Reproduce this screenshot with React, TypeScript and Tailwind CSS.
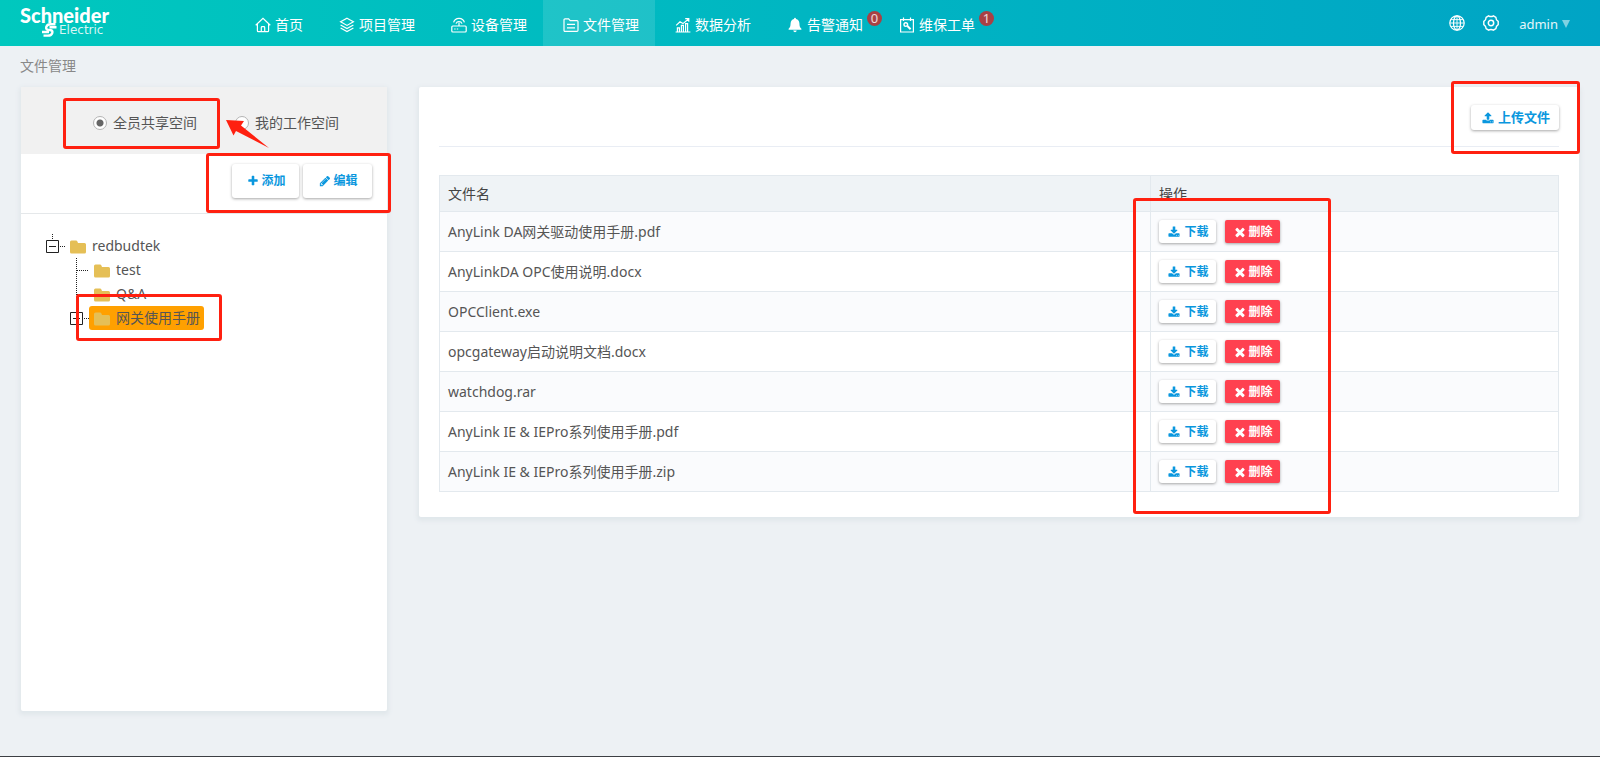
import type { ReactNode } from "react";

interface NavItem {
  label: string;
  icon: ReactNode;
  active?: boolean;
  badge?: number;
}

function LineIcon({ children }: { children: ReactNode }) {
  return (
    <svg viewBox="0 0 16 16" className="h-4 w-4 shrink-0" fill="none" stroke="currentColor" strokeWidth="1.2" aria-hidden="true">
      {children}
    </svg>
  );
}

function Glyph({ d, viewBox = "0 0 1792 1792" }: { d: string; viewBox?: string }) {
  return (
    <svg viewBox={viewBox} className="h-3 w-3 shrink-0" fill="currentColor" aria-hidden="true">
      <path d={d} />
    </svg>
  );
}

const glyphs = {
  upload:
    "M1280 1472q0-26-19-45t-45-19-45 19-19 45 19 45 45 19 45-19 19-45zm256 0q0-26-19-45t-45-19-45 19-19 45 19 45 45 19 45-19 19-45zm128-224v320q0 40-28 68t-68 28h-1472q-40 0-68-28t-28-68v-320q0-40 28-68t68-28h427q21 56 70.5 92t110.5 36h256q61 0 110.5-36t70.5-92h427q40 0 68 28t28 68zm-325-648q-17 40-59 40h-256v448q0 26-19 45t-45 19h-256q-26 0-45-19t-19-45v-448h-256q-42 0-59-40-17-39 14-69l448-448q18-19 45-19t45 19l448 448q31 30 14 69z",
  download:
    "M1344 1344q0-26-19-45t-45-19-45 19-19 45 19 45 45 19 45-19 19-45zm256 0q0-26-19-45t-45-19-45 19-19 45 19 45 45 19 45-19 19-45zm128-224v320q0 40-28 68t-68 28h-1472q-40 0-68-28t-28-68v-320q0-40 28-68t68-28h465l135 136q58 56 136 56t136-56l136-136h464q40 0 68 28t28 68zm-325-569q17 41-14 70l-448 448q-18 19-45 19t-45-19l-448-448q-31-29-14-70 17-39 59-39h256v-448q0-26 19-45t45-19h256q26 0 45 19t19 45v448h256q42 0 59 39z",
  times:
    "M1490 1322q0 40-28 68l-136 136q-28 28-68 28t-68-28l-294-294-294 294q-28 28-68 28t-68-28l-136-136q-28-28-28-68t28-68l294-294-294-294q-28-28-28-68t28-68l136-136q28-28 68-28t68 28l294 294 294-294q28-28 68-28t68 28l136 136q28 28 28 68t-28 68l-294 294 294 294q28 28 28 68z",
  plus:
    "M1600 736v192q0 40-28 68t-68 28h-416v416q0 40-28 68t-68 28h-192q-40 0-68-28t-28-68v-416h-416q-40 0-68-28t-28-68v-192q0-40 28-68t68-28h416v-416q0-40 28-68t68-28h192q40 0 68 28t28 68v416h416q40 0 68 28t28 68z",
  pencil:
    "M491 1536l91-91-235-235-91 91v107h128v128h107zm523-928q0-22-22-22-10 0-17 7l-542 542q-7 7-7 17 0 22 22 22 10 0 17-7l542-542q7-7 7-17zm-54-192l416 416-832 832h-416v-416zm683 96q0 53-37 90l-166 166-416-416 166-165q36-38 90-38 53 0 91 38l235 234q37 39 37 91z",
};

const navItems: NavItem[] = [
  {
    label: "首页",
    icon: (
      <LineIcon>
        <path d="M.7 8.2 8 1.4l7.3 6.8M2.4 7v6.7q0 1 1 1h9.2q1 0 1-1V7" />
        <path d="M6.3 14.5v-4q0-.8.8-.8h1.8q.8 0 .8.8v4" />
      </LineIcon>
    ),
  },
  {
    label: "项目管理",
    icon: (
      <LineIcon>
        <path d="M8 1.2 14.4 4.8 8 8.4 1.6 4.8Z" />
        <path d="M1.6 7.9 8 11.5l6.4-3.6M1.6 11 8 14.6l6.4-3.6" />
      </LineIcon>
    ),
  },
  {
    label: "设备管理",
    icon: (
      <LineIcon>
        <rect x=".8" y="9" width="14.4" height="6" rx="1" />
        <path d="M8 9V5.6M2.6 5.4a5.6 5.6 0 0 1 10.800 0M5 6.600a3.200 3.200 0 0 1 6 0M3.2 12h1.4M5.8 12h1.4" />
      </LineIcon>
    ),
  },
  {
    label: "文件管理",
    active: true,
    icon: (
      <LineIcon>
        <path d="M1 13.2V2.8q0-1 1-1h3.6l1.6 1.8H14q1 0 1 1v8.6q0 1.2-1 1.2H2q-1 0-1-1.2Z" />
        <path d="M4 7.4h8M4 10.8h8" />
      </LineIcon>
    ),
  },
  {
    label: "数据分析",
    icon: (
      <LineIcon>
        <path d="M.6 15h14.8M2.4 15v-4.2h2V15M6.4 15V8.4h2V15M10.6 15V6.6h2V15M1.2 8.4 5 4.8l3 1.8 5.2-4.4M10.2 1.6h3.6v3.2" />
      </LineIcon>
    ),
  },
  {
    label: "告警通知",
    badge: 0,
    icon: (
      <svg viewBox="0 0 16 16" className="h-4 w-4 shrink-0" fill="currentColor" aria-hidden="true">
        <path d="M8 .8q.9 0 1 1.1 3.2.7 3.4 4.4c.1 3 .5 4.2 2 5.4v1H1.6v-1c1.5-1.2 1.9-2.4 2-5.4Q3.8 2.6 7 1.9 7.1.8 8 .8ZM6.2 13.5h3.6q-.4 1.7-1.8 1.7t-1.8-1.7Z" />
      </svg>
    ),
  },
  {
    label: "维保工单",
    badge: 1,
    icon: (
      <LineIcon>
        <path d="M1.6 2.6h12.800V15H1.6ZM4.500 .6v3.400M11.500 .6v3.400" />
        <circle cx="6.800" cy="7.600" r="1.800" strokeWidth="1.400" />
        <path d="m8.400 9 3.200 3.200" strokeWidth="2" />
      </LineIcon>
    ),
  },
];

const files = [
  "AnyLink DA网关驱动使用手册.pdf",
  "AnyLinkDA OPC使用说明.docx",
  "OPCClient.exe",
  "opcgateway启动说明文档.docx",
  "watchdog.rar",
  "AnyLink IE & IEPro系列使用手册.pdf",
  "AnyLink IE & IEPro系列使用手册.zip",
];

const whiteButton = "flex items-center justify-center rounded-[3px] bg-white pl-0.5 font-bold text-[#0a97de] shadow-[0_1px_3px_rgba(0,0,0,0.35)]";

function Logo() {
  return (
    <svg viewBox="0 0 100 40" className="h-10 w-[100px]" fill="#fff" role="img" aria-label="Schneider Electric">
      <text x="0" y="20" fontFamily="Lato" fontWeight="900" fontSize="20">Schneider</text>
      <text x="39" y="31" fontFamily="DejaVu Sans" fontSize="12" fillOpacity=".85">Electric</text>
      <path
        d="M35.500 21.200h-5q-3.300 0-4.200 2.600-.8 2.700 2 3.100l2.600.4q2 .4 1.400 2.500-.8 2.800-4.300 2.800h-4.500M29.500 24.300h7M22 29h7"
        fill="none"
        stroke="#fff"
        strokeWidth="2.400"
      />
    </svg>
  );
}

function TopBar() {
  return (
    <header className="flex h-[46px] items-center bg-gradient-to-r from-[#00c8be] to-[#00a4c5] pl-5 pr-[30px] text-white">
      <a href="#" className="w-[215px] shrink-0"><Logo /></a>
      <nav className="flex h-full flex-1">
        {navItems.map((item) => (
          <a
            key={item.label}
            href="#"
            className={`relative flex items-center gap-1 whitespace-nowrap pl-5 pr-4 pt-1 ${item.active ? "bg-white/12" : ""}`}
          >
            {item.icon}
            {item.label}
            {item.badge !== undefined && (
              <span className="absolute -right-[3px] top-[11px] h-[15px] w-[15px] rounded-full bg-[#a94044] text-center text-[13px] leading-[15px] text-white/80">
                {item.badge}
              </span>
            )}
          </a>
        ))}
      </nav>
      <div className="flex items-center gap-[18px]">
        <button type="button" aria-label="语言">
          <LineIcon>
            <circle cx="8" cy="8" r="7.2" />
            <ellipse cx="8" cy="8" rx="3.5" ry="7.2" />
            <path d="M8 .8v14.4M.8 8h14.4M2 4.6h12M2 11.400h12" strokeWidth=".9" />
          </LineIcon>
        </button>
        <button type="button" aria-label="设置">
          <LineIcon>
            <path strokeWidth="1.4" d="M5.6.8q2.4 1.5 4.8 0l2.5 1.5q-.1 2.7 2.3 4.100v3.200q-2.400 1.400-2.300 4.100l-2.500 1.500q-2.400-1.500-4.800 0l-2.500-1.500q.1-2.700-2.300-4.100V6.400q2.400-1.400 2.300-4.100Z" />
            <circle cx="8" cy="8" r="2.7" strokeWidth="1.5" />
          </LineIcon>
        </button>
        <button type="button" className="flex items-center gap-1 pl-0.5 pt-0.5 text-[13px] text-white/90">
          admin
          <svg viewBox="0 0 8 8" className="h-2 w-2" fill="#fff" fillOpacity=".5" aria-hidden="true">
            <path d="M0 0h8L4 8Z" />
          </svg>
        </button>
      </div>
    </header>
  );
}

interface TreeRowProps {
  label: string;
  kind: "root" | "leaf" | "closed";
  selected?: boolean;
}

function TreeRow({ label, kind, selected }: TreeRowProps) {
  return (
    <div className="flex h-6 items-center">
      <svg viewBox="0 0 24 24" className="h-6 w-6 shrink-0" fill="none" stroke="#222" aria-hidden="true">
        <path d={kind === "leaf" ? "M11.5 0v24M12 12.5h12" : "M11.5 0v6M19 12.5h5"} strokeDasharray="1 1" />
        {kind !== "leaf" && <path d="M5.5 6.5h12v12h-12ZM8 12.5h7" />}
        {kind === "closed" && <path d="M11.5 9v7" />}
      </svg>
      <a href="#" className={`flex h-6 items-center gap-1.5 rounded-[3px] pl-[5px] pr-1 ${selected ? "bg-[#ffa000]" : ""}`}>
        <svg viewBox="0 0 16 14" className="mt-0.5 h-3.5 w-4" fill="#e5bf56" aria-hidden="true">
          <path d="M0 2Q0 .5 1.5.5h4.5Q7 .5 7.4 1.5L8 3h6.5q1.5 0 1.5 1.5v7.5q0 1.5-1.5 1.5h-13Q0 13.5 0 12Z" />
        </svg>
        {label}
      </a>
    </div>
  );
}

// red annotation frame, placed by the caller
function Mark({ className }: { className: string }) {
  return <div className={`pointer-events-none absolute rounded-[3px] border-3 border-[#ff2010] ${className}`} />;
}

const radioClass =
  "h-3.5 w-3.5 appearance-none rounded-full border border-[#b4b4b4] bg-white checked:bg-[radial-gradient(circle,#666_3px,#fff_4px)]";

function SpacePanel() {
  return (
    <aside className="relative w-[366px] shrink-0 rounded-[2px] bg-white shadow-[0_2px_4px_2px_#e1e7eb]">
      <div className="flex h-[67px] items-center gap-[38px] bg-[#f1f1f1] pl-[72px] pt-1">
        <label className="flex items-center gap-1.5">
          <input type="radio" name="space" defaultChecked className={radioClass} />
          全员共享空间
        </label>
        <label className="flex items-center gap-1.5">
          <input type="radio" name="space" className={radioClass} />
          我的工作空间
        </label>
      </div>
      <div className="flex h-[60px] items-start justify-end gap-1 border-b border-[#e5e8ea] pr-[15px] pt-2.5 text-xs">
        <button type="button" className={`${whiteButton} h-[34px] w-[67px] gap-0.5`}>
          <Glyph d={glyphs.plus} />
          添加
        </button>
        <button type="button" className={`${whiteButton} h-[34px] w-[69px] gap-0.5`}>
          <Glyph d={glyphs.pencil} />
          编辑
        </button>
      </div>
      <div className="pl-5 pt-5">
        <TreeRow label="redbudtek" kind="root" />
        <div className="pl-6">
          <TreeRow label="test" kind="leaf" />
          <TreeRow label="Q&A" kind="leaf" />
          <TreeRow label="网关使用手册" kind="closed" selected />
        </div>
      </div>
      <Mark className="left-[42px] top-[11px] h-[51px] w-[157px]" />
      <Mark className="left-[185px] top-[66px] h-[60px] w-[185px]" />
      <Mark className="left-[55px] top-[207px] h-[47px] w-[146px]" />
      <svg viewBox="0 0 44 28" className="pointer-events-none absolute left-[205px] top-[33px] h-7 w-11" fill="#ff2010" aria-hidden="true">
        <path d="M0 0 18 1 15 5.5 43 28 10 11 7.5 15.5Z" />
      </svg>
    </aside>
  );
}

function FilePanel() {
  return (
    <section className="relative min-w-0 flex-1 self-start rounded-[2px] bg-white px-5 pb-[25px] shadow-[0_2px_4px_2px_#e1e7eb]">
      <div className="mb-7 flex h-[60px] items-start justify-end border-b border-[#e9edf4] pt-[18px] text-[13px]">
        <button type="button" className={`${whiteButton} h-[25px] w-[88px] gap-1`}>
          <Glyph d={glyphs.upload} viewBox="0 0 1664 1792" />
          上传文件
        </button>
      </div>
      <table className="w-full table-fixed border-collapse text-left">
        <thead>
          <tr className="h-9 bg-[#eff3f6] text-[#444]">
            <th className="border border-[#e3e9ee] px-2 font-normal">文件名</th>
            <th className="w-[408px] border border-[#e3e9ee] px-2 font-normal">操作</th>
          </tr>
        </thead>
        <tbody>
          {files.map((name) => (
            <tr key={name} className="h-10 odd:bg-[#fafbfd]">
              <td className="border border-[#e3e9ee] px-2">{name}</td>
              <td className="border border-[#e3e9ee] px-2">
                <div className="flex gap-[9px] text-xs">
                  <button type="button" className={`${whiteButton} h-[23px] w-[57px] gap-1`}>
                    <Glyph d={glyphs.download} viewBox="64 -64 1664 1792" />
                    下载
                  </button>
                  <button
                    type="button"
                    className="flex h-[23px] w-[55px] items-center justify-center gap-0.5 rounded-[2px] bg-[#ff4150] pl-0.5 font-bold text-white shadow-[0_1px_3px_rgba(0,0,0,0.35)]"
                  >
                    <Glyph d={glyphs.times} viewBox="128 128 1536 1536" />
                    删除
                  </button>
                </div>
              </td>
            </tr>
          ))}
        </tbody>
      </table>
      <Mark className="-right-px -top-1.5 h-[73px] w-[129px]" />
      <Mark className="right-[248px] top-[111px] h-[316px] w-[198px]" />
    </section>
  );
}

export default function App() {
  return (
    <div className="flex min-h-screen flex-col border-b border-[#3c3f43] bg-[#edf1f4] font-['Noto_Sans','Noto_Sans_CJK_SC',sans-serif] text-sm text-[#555]">
      <TopBar />
      <h1 className="h-[41px] pl-5 leading-10 text-[#888]">文件管理</h1>
      <main className="flex flex-1 gap-8 px-[21px] pb-[45px]">
        <SpacePanel />
        <FilePanel />
      </main>
    </div>
  );
}
